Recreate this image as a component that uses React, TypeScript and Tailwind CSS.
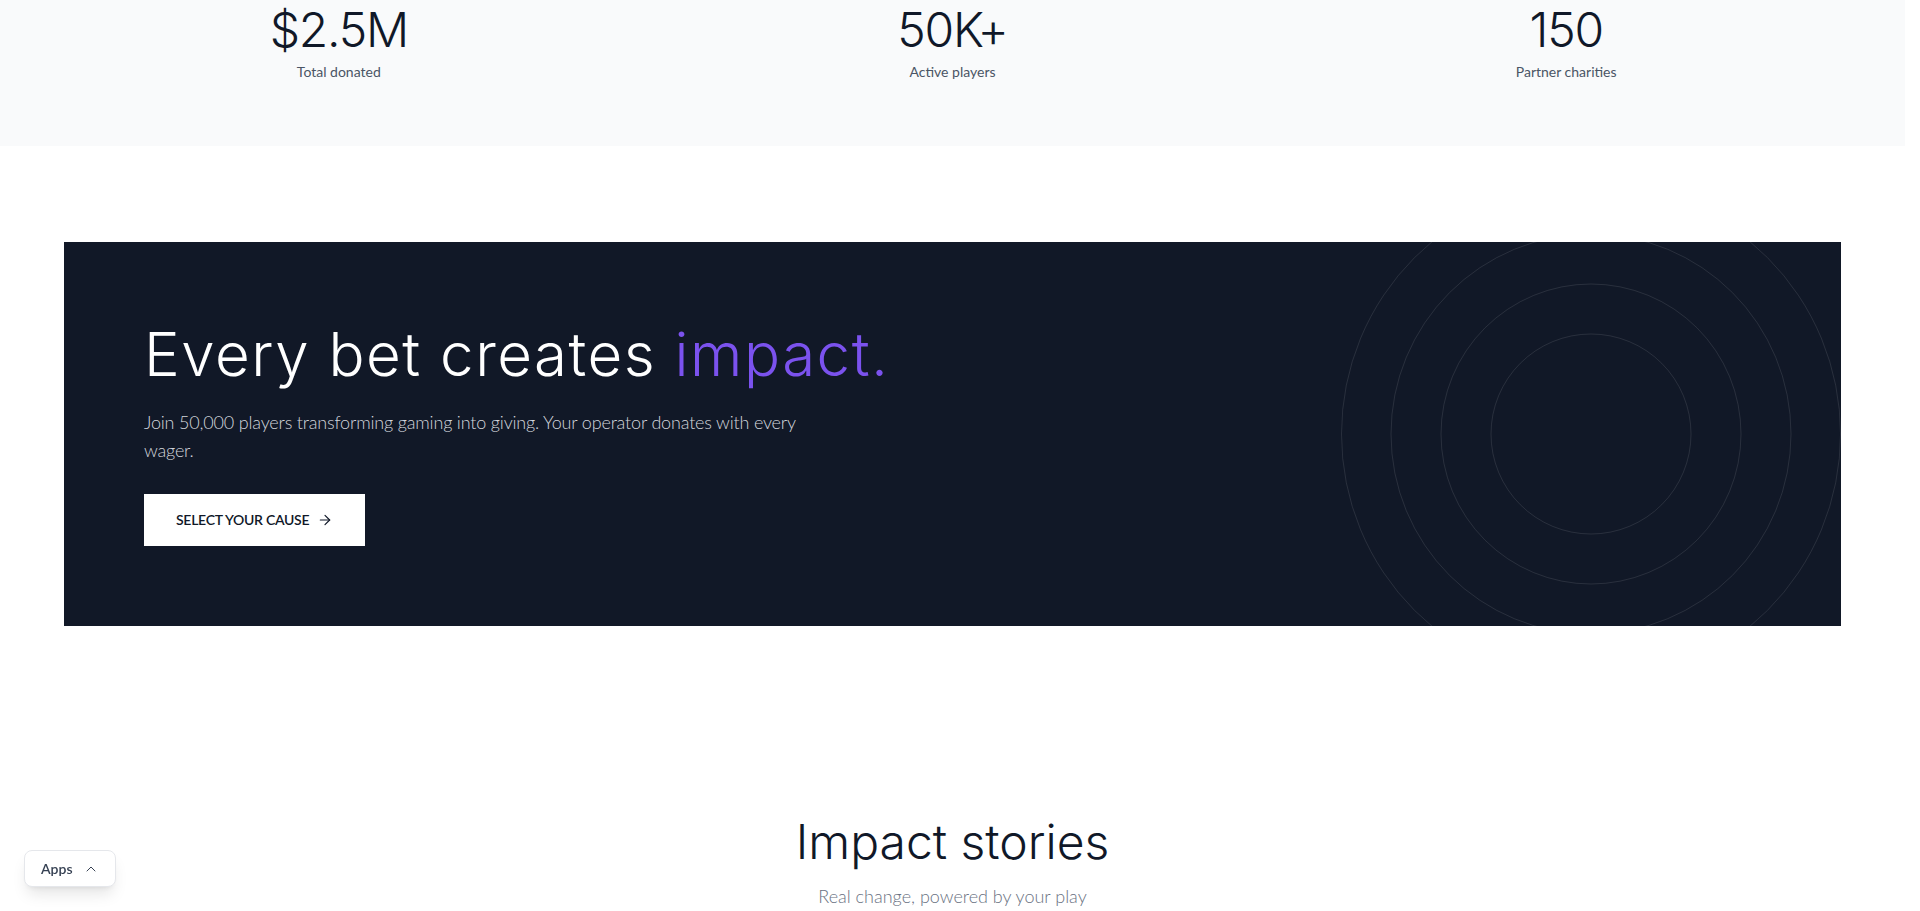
import React from "react";
import { ArrowRight, ChevronUp } from "lucide-react";

const stats = [
  { value: "$2.5M", label: "Total donated" },
  { value: "50K+", label: "Active players" },
  { value: "150", label: "Partner charities" },
];

const Rings = () => (
  <svg
    width="500"
    height="500"
    viewBox="0 0 500 500"
    fill="none"
    className="absolute right-0 top-1/2 -translate-y-1/2"
  >
    {[100, 150, 200, 249.5].map((r) => (
      <circle key={r} cx="250" cy="250" r={r} stroke="rgba(255,255,255,0.1)" strokeWidth="1" />
    ))}
  </svg>
);

const App: React.FC = () => {
  return (
    <div className="h-[911px] overflow-hidden bg-white pr-[15px] font-['Lato',sans-serif] text-gray-900">
      <div className="-mt-[58px]">
        {/* stats */}
        <section className="bg-gray-50 px-8 py-16">
          <div className="grid grid-cols-3">
            {stats.map((s) => (
              <div key={s.label} className="flex flex-col items-center">
                <span className="font-['Inter',sans-serif] text-5xl font-light leading-none tracking-tight text-gray-900">
                  {s.value}
                </span>
                <span className="mt-2 text-sm text-gray-600">{s.label}</span>
              </div>
            ))}
          </div>
        </section>

        {/* cta banner */}
        <section className="px-16 py-24">
          <div className="relative overflow-hidden bg-[#111827] p-20">
            <Rings />
            <div className="relative">
              <h2 className="mt-[2px] font-['Inter',sans-serif] text-6xl font-light leading-none tracking-[0.025em] text-white">
                Every bet creates <span className="text-[#7b52ee]">impact.</span>
              </h2>
              <p className="mt-6 max-w-2xl text-lg font-light tracking-[-0.01em] text-gray-300">
                Join 50,000 players transforming gaming into giving. Your operator donates with every wager.
              </p>
              <button className="mt-[30px] flex items-center gap-2 bg-white px-8 py-4 text-sm font-semibold uppercase tracking-[-0.02em] text-gray-900">
                Select your cause
                <ArrowRight size={16} strokeWidth={1.75} />
              </button>
            </div>
          </div>
        </section>

        {/* stories */}
        <section className="px-16 pt-24 pb-16">
          <div className="flex flex-col items-center text-center">
            <h2 className="font-['Inter',sans-serif] text-5xl font-light leading-none text-gray-900">
              Impact stories
            </h2>
            <p className="mt-4 text-lg font-light text-gray-500">Real change, powered by your play</p>
          </div>
        </section>
      </div>

      <button className="fixed bottom-6 left-6 flex h-[37px] items-center gap-2.5 rounded-lg border border-gray-200 bg-white px-4 text-sm font-semibold text-gray-700 shadow-lg">
        Apps
        <ChevronUp size={16} strokeWidth={1.5} />
      </button>
    </div>
  );
};

export default App;
